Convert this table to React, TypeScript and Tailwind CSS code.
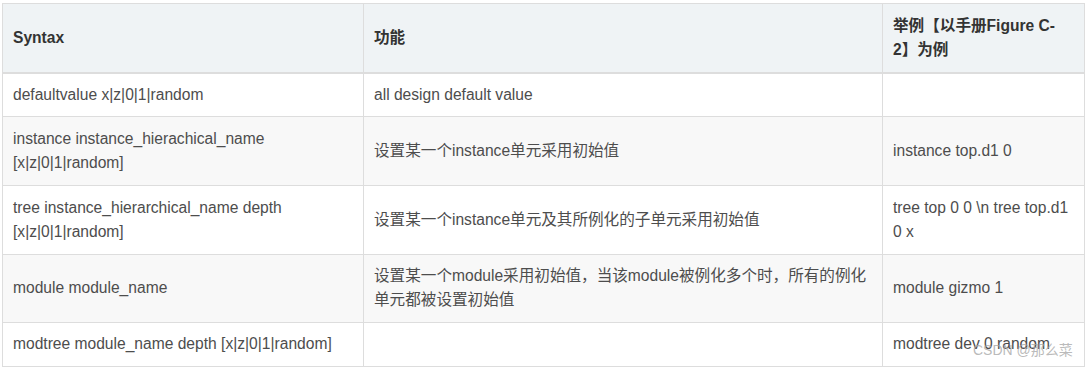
import React from "react";

const font = {
  fontFamily:
    '"Liberation Sans", Arial, "Noto Sans CJK SC", sans-serif',
};

export default function App() {
  const td =
    "border border-[#dddddd] px-[10px] py-[9px] align-middle text-left whitespace-nowrap overflow-hidden";
  return (
    <div className="relative w-[1088px] h-[368px] bg-white pl-[2px] pt-[3px]" style={font}>
      <table className="table-fixed border-collapse w-[1082px] text-[15.6px] leading-[24px] text-[#4d4d4d]">
        <colgroup>
          <col className="w-[361px]" />
          <col className="w-[519px]" />
          <col className="w-[202px]" />
        </colgroup>
        <thead>
          <tr className="bg-[#eff3f5] h-[69px]">
            <th className={`${td} border-b-2 font-bold text-[#333333]`}>Syntax</th>
            <th className={`${td} border-b-2 font-bold text-[#333333]`}>功能</th>
            <th className={`${td} border-b-2 font-bold text-[#333333]`}>
              举例【以手册Figure C-
              <br />
              2】为例
            </th>
          </tr>
        </thead>
        <tbody>
          <tr className="bg-white h-[42px]">
            <td className={td}>defaultvalue x|z|0|1|random</td>
            <td className={td}>all design default value</td>
            <td className={td}></td>
          </tr>
          <tr className="bg-[#f8f8f8] h-[69px]">
            <td className={td}>
              instance instance_hierachical_name
              <br />
              [x|z|0|1|random]
            </td>
            <td className={td}>设置某一个instance单元采用初始值</td>
            <td className={td}>instance top.d1 0</td>
          </tr>
          <tr className="bg-white h-[69px]">
            <td className={td}>
              tree instance_hierarchical_name depth
              <br />
              [x|z|0|1|random]
            </td>
            <td className={td}>设置某一个instance单元及其所例化的子单元采用初始值</td>
            <td className={td}>
              tree top 0 0 \n tree top.d1
              <br />0 x
            </td>
          </tr>
          <tr className="bg-[#f8f8f8] h-[68px]">
            <td className={td}>module module_name</td>
            <td className={td}>
              设置某一个module采用初始值，当该module被例化多个时，所有的例化
              <br />
              单元都被设置初始值
            </td>
            <td className={td}>module gizmo 1</td>
          </tr>
          <tr className="bg-white h-[44px]">
            <td className={td}>modtree module_name depth [x|z|0|1|random]</td>
            <td className={td}></td>
            <td className={td}>modtree dev 0 random</td>
          </tr>
        </tbody>
      </table>
      <div className="absolute left-[973px] top-[341px] text-[14px] leading-[18px] text-[#a8a8a8]/80 whitespace-nowrap">
        CSDN @那么菜
      </div>
    </div>
  );
}
